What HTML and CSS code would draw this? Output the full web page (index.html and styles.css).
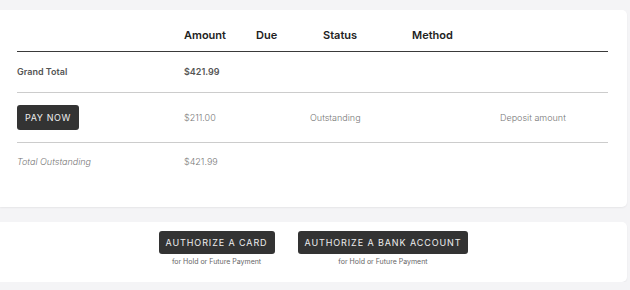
FILE: index.html
```html
<!DOCTYPE html>
<html lang="en">
<head>
  <meta charset="UTF-8" />
  <title>Payments</title>
  <link rel="stylesheet" href="styles.css">
</head>
<body>
  <div class="card payments">
    <div class="row head">
      <span></span>
      <span>Amount</span>
      <span>Due</span>
      <span>Status</span>
      <span>Method</span>
    </div>
    <div class="row total">
      <span>Grand Total</span>
      <span>$421.99</span>
    </div>
    <div class="row line">
      <span><button class="btn">PAY NOW</button></span>
      <span>$211.00</span>
      <span>Outstanding</span>
      <span>Deposit amount</span>
    </div>
    <div class="row outstanding">
      <span class="italic">Total Outstanding</span>
      <span>$421.99</span>
    </div>
  </div>

  <div class="card authorize">
    <div class="auth">
      <button class="btn">AUTHORIZE A CARD</button>
      <small>for Hold or Future Payment</small>
    </div>
    <div class="auth">
      <button class="btn">AUTHORIZE A BANK ACCOUNT</button>
      <small>for Hold or Future Payment</small>
    </div>
  </div>
</body>
</html>
```

FILE: styles.css
```css
* {
  box-sizing: border-box;
}

body {
  margin: 0;
  padding: 10px 3px 0 0;
  background: #f4f4f6;
  font-family: 'Inter', 'Noto Sans', sans-serif;
  color: #333;
}

.card {
  background: #fff;
  border-radius: 0 5px 5px 0;
  box-shadow: 0 1px 2px rgba(0, 0, 0, 0.06);
}

.payments {
  padding: 18px 19px 26px 17px;
}

.row {
  display: grid;
  align-items: center;
  font-size: 9px;
  line-height: 14px;
}

.head {
  grid-template-columns: 167px 72px 67px 89px auto;
  font-size: 11px;
  font-weight: 600;
  color: #222;
  padding-bottom: 9px;
  border-bottom: 1px solid #3a3a3a;
}

.total {
  grid-template-columns: 167px auto;
  font-weight: 600;
  color: #555;
  padding: 13px 0 13px;
  border-bottom: 1px solid #ccc;
}

.line {
  grid-template-columns: 167px 126px 190px auto;
  color: #777;
  font-weight: 300;
  padding: 12px 0;
  border-bottom: 1px solid #ccc;
}

.outstanding {
  grid-template-columns: 167px auto;
  color: #777;
  font-weight: 300;
  padding: 12px 0;
}

.italic {
  font-style: italic;
}

.btn {
  background: #333;
  color: #eee;
  border: none;
  border-radius: 3px;
  font-family: inherit;
  font-size: 9px;
  letter-spacing: 0.6px;
  padding: 0 8px;
  height: 25px;
  cursor: pointer;
}

.line .btn {
  width: 62px;
  padding: 0;
}

.authorize {
  margin-top: 15px;
  height: 60px;
  padding-top: 9px;
  display: flex;
  justify-content: center;
  gap: 23px;
}

.auth {
  display: flex;
  flex-direction: column;
  align-items: center;
}

.authorize .btn {
  height: 23px;
  font-size: 9px;
  letter-spacing: 0.9px;
  padding: 0 7px;
}

.auth small {
  font-size: 7px;
  color: #666;
  margin-top: 3px;
}
```
